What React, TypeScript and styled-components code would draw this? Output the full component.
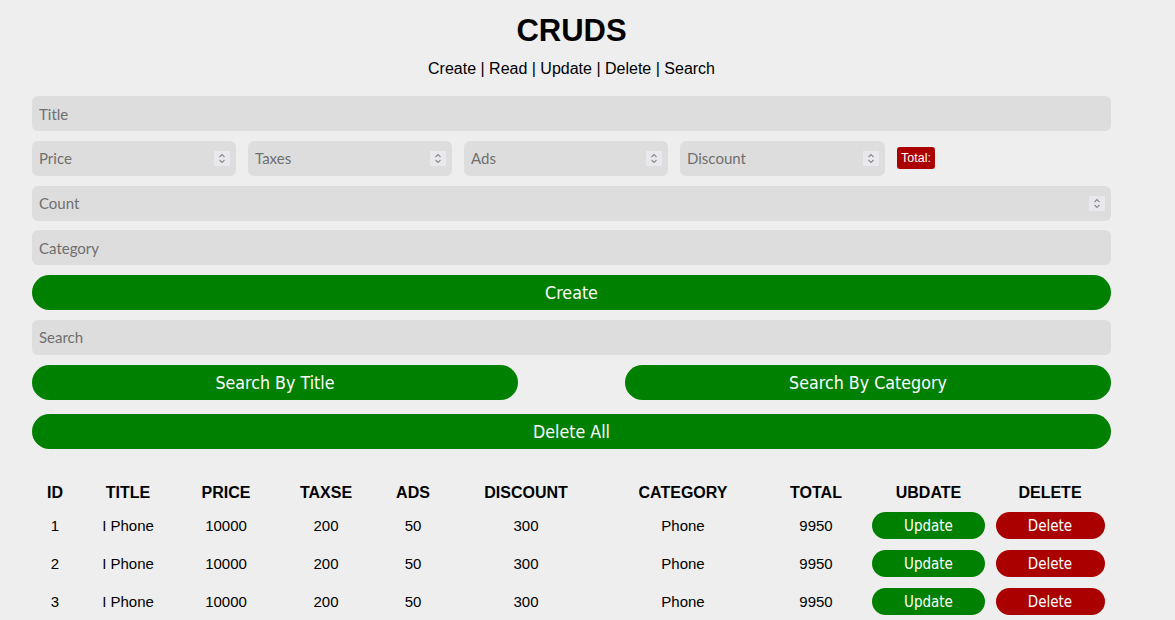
import React from "react";
import styled, { createGlobalStyle } from "styled-components";

const GlobalStyle = createGlobalStyle`
  html, body {
    margin: 0;
    padding: 0;
    background: #eeeeee;
    font-family: "Liberation Sans", Arial, sans-serif;
    color: #000;
  }
  * { box-sizing: border-box; }
`;

const Main = styled.main`
  width: 1079px;
  margin-left: 32px;
  padding-top: 13px;
`;

const Header = styled.header`
  display: flex;
  flex-direction: column;
  align-items: center;
`;

const Title = styled.h1`
  margin: 0;
  font-size: 31px;
  line-height: 36px;
  font-weight: 700;
`;

const Subtitle = styled.p`
  margin: 11px 0 0;
  font-size: 16px;
  line-height: 18px;
`;

const Form = styled.section`
  margin-top: 18px;
  display: flex;
  flex-direction: column;
  gap: 9.8px;
`;

const Field = styled.label<{ $width?: string }>`
  display: flex;
  align-items: center;
  height: 35px;
  width: ${(p) => p.$width ?? "100%"};
  flex: 0 0 auto;
  background: #dddddd;
  border-radius: 6px;
  padding: 0 6px 0 7px;
`;

const Input = styled.input`
  flex: 1;
  min-width: 0;
  border: none;
  outline: none;
  background: transparent;
  padding: 0;
  font-family: Lato, "Open Sans", sans-serif;
  font-size: 15px;
  color: #333;
  &::placeholder {
    color: #6f6f6f;
  }
`;

const Spinner = styled.span`
  width: 16px;
  height: 15px;
  background: #e9e9ed;
  display: flex;
  align-items: center;
  justify-content: center;
`;

const PriceRow = styled.div`
  display: flex;
  align-items: center;
  gap: 12px;
`;

const TotalBadge = styled.span`
  display: inline-block;
  height: 22px;
  line-height: 22px;
  padding: 0 4px;
  background: #aa0000;
  color: #fff;
  font-size: 12.5px;
  border-radius: 3px;
`;

const PillButton = styled.button<{ $width?: string }>`
  height: 35px;
  width: ${(p) => p.$width ?? "100%"};
  border: none;
  border-radius: 18px;
  background: #008000;
  color: #fff;
  font-family: "DejaVu Sans Condensed", "DejaVu Sans", sans-serif;
  font-size: 17.7px;
  cursor: pointer;
  padding: 1px 0 0;
`;

const SearchRow = styled.div`
  display: flex;
  justify-content: space-between;
`;

const DeleteAllWrap = styled.div`
  margin-top: 4.4px;
`;

const Table = styled.table`
  margin-top: 25px;
  width: 100%;
  border-collapse: collapse;
  table-layout: fixed;
`;

const Th = styled.th`
  height: 33px;
  padding: 5px 0 0;
  font-size: 16px;
  font-weight: 700;
  text-transform: uppercase;
  text-align: center;
  vertical-align: middle;
`;

const Td = styled.td`
  height: 38px;
  padding: 0;
  font-size: 15px;
  text-align: center;
`;

const RowButton = styled.button<{ $danger?: boolean; $width: number }>`
  width: ${(p) => p.$width}px;
  height: 27px;
  border: none;
  border-radius: 14px;
  background: ${(p) => (p.$danger ? "#aa0000" : "#008000")};
  color: #fff;
  font-family: "DejaVu Sans Condensed", "DejaVu Sans", sans-serif;
  font-size: 15px;
  padding: 1px 0 0;
  cursor: pointer;
  vertical-align: middle;
`;

const SpinIcon = () => (
  <svg width="8" height="11" viewBox="0 0 8 11" fill="none">
    <path d="M1.5 4 L4 1.5 L6.5 4" stroke="#8a8a8a" strokeWidth="1.1" />
    <path d="M1.5 7 L4 9.5 L6.5 7" stroke="#8a8a8a" strokeWidth="1.1" />
  </svg>
);

const NumberField = ({ placeholder, width }: { placeholder: string; width?: string }) => (
  <Field $width={width}>
    <Input type="text" inputMode="numeric" placeholder={placeholder} />
    <Spinner>
      <SpinIcon />
    </Spinner>
  </Field>
);

const columns = [46, 100, 96, 104, 70, 156, 158, 108, 117, 126];
const headers = ["id", "title", "price", "taxse", "ads", "discount", "category", "total", "ubdate", "delete"];

const rows = [1, 2, 3].map((id) => ({
  id,
  title: "I Phone",
  price: 10000,
  taxes: 200,
  ads: 50,
  discount: 300,
  category: "Phone",
  total: 9950,
}));

export default function App() {
  return (
    <>
      <GlobalStyle />
      <Main>
        <Header>
          <Title>CRUDS</Title>
          <Subtitle>Create | Read | Update | Delete | Search</Subtitle>
        </Header>
        <Form>
          <Field>
            <Input placeholder="Title" />
          </Field>
          <PriceRow>
            <NumberField placeholder="Price" width="204px" />
            <NumberField placeholder="Taxes" width="204px" />
            <NumberField placeholder="Ads" width="204px" />
            <NumberField placeholder="Discount" width="205px" />
            <TotalBadge>Total:</TotalBadge>
          </PriceRow>
          <NumberField placeholder="Count" />
          <Field>
            <Input placeholder="Category" />
          </Field>
          <PillButton>Create</PillButton>
          <Field>
            <Input placeholder="Search" />
          </Field>
          <SearchRow>
            <PillButton $width="486px">Search By Title</PillButton>
            <PillButton $width="486px">Search By Category</PillButton>
          </SearchRow>
          <DeleteAllWrap>
            <PillButton>Delete All</PillButton>
          </DeleteAllWrap>
        </Form>
        <Table>
          <colgroup>
            {columns.map((w, i) => (
              <col key={i} style={{ width: w }} />
            ))}
          </colgroup>
          <thead>
            <tr>
              {headers.map((h) => (
                <Th key={h}>{h}</Th>
              ))}
            </tr>
          </thead>
          <tbody>
            {rows.map((r) => (
              <tr key={r.id}>
                <Td>{r.id}</Td>
                <Td>{r.title}</Td>
                <Td>{r.price}</Td>
                <Td>{r.taxes}</Td>
                <Td>{r.ads}</Td>
                <Td>{r.discount}</Td>
                <Td>{r.category}</Td>
                <Td>{r.total}</Td>
                <Td>
                  <RowButton $width={113}>Update</RowButton>
                </Td>
                <Td>
                  <RowButton $danger $width={109}>Delete</RowButton>
                </Td>
              </tr>
            ))}
          </tbody>
        </Table>
      </Main>
    </>
  );
}
